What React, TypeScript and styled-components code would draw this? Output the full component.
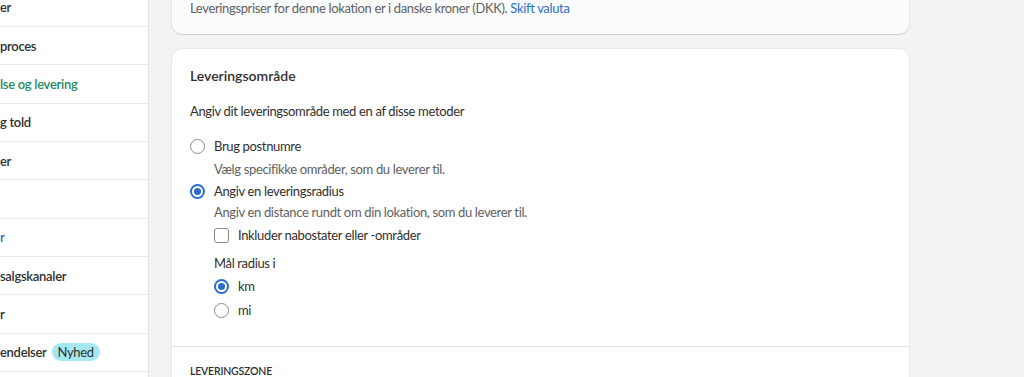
import styled, { createGlobalStyle } from "styled-components";

const GlobalStyle = createGlobalStyle`
	html, body {
		margin: 0;
		padding: 0;
		height: 100%;
		overflow: hidden;
		background: #f3f3f3;
	}
	body {
		font-family: Lato, "Noto Sans", sans-serif;
		font-size: 13px;
		letter-spacing: -0.35px;
		color: #303030;
	}
	#root {
		height: 100%;
	}
`

const Shell = styled.div`
	display: flex;
	align-items: flex-start;
	height: 100vh;
	overflow: hidden;
`

// Settings navigation (scrolled so the labels are cut on the left)
const Sidebar = styled.nav`
	flex: 0 0 148px;
	align-self: stretch;
	background: #ffffff;
	border-right: 1px solid #e3e3e3;
	overflow: hidden;
`

const NavList = styled.ul`
	margin: -11.33px 0 0;
	padding: 0;
	list-style: none;
`

type Tone = 'default' | 'active' | 'link';

const toneColor: Record<Tone, string> = {
	default: '#303030',
	active: '#1f8a65',
	link: '#2c6ecb',
}

const NavItem = styled.li<{ $tone: Tone }>`
	display: flex;
	align-items: center;
	gap: 5px;
	height: 38.33px;
	box-sizing: border-box;
	border-bottom: 1px solid #ebebeb;
	font-weight: 600;
	letter-spacing: -0.3px;
	line-height: 20px;
	white-space: nowrap;
	color: ${p => toneColor[p.$tone]};
`

const Badge = styled.span`
	display: inline-flex;
	align-items: center;
	height: 18px;
	padding: 0 6px;
	border-radius: 9px;
	background: #a4e8f2;
	color: #303030;
	font-weight: 400;
	letter-spacing: -0.35px;
`

const Main = styled.main`
	flex: 0 0 737px;
	margin: -18px 0 0 23px;
	display: flex;
	flex-direction: column;
	gap: 15px;
`

const Card = styled.section<{ $muted?: boolean }>`
	background: ${p => p.$muted ? '#fafbfb' : '#ffffff'};
	border-radius: 10px;
	box-shadow: 0 1px 1px rgba(0, 0, 0, 0.12), 0 0 0 1px rgba(0, 0, 0, 0.035);
	overflow: hidden;
`

const NoticeText = styled.p`
	margin: 0;
	padding: 16px 18px;
	line-height: 20px;
	color: #616161;
`

const Link = styled.a`
	color: #2c6ecb;
	text-decoration: none;
	cursor: pointer;
`

const Section = styled.div<{ $divided?: boolean }>`
	padding: ${p => p.$divided ? '16px 18px' : '17px 18px 24px'};
	border-top: ${p => p.$divided ? '1px solid #e3e3e3' : 'none'};
`

const Title = styled.h2`
	margin: 0;
	font-size: 14px;
	font-weight: 600;
	letter-spacing: 0;
	line-height: 20px;
`

const Text = styled.p`
	margin: 15px 0 0;
	line-height: 20px;
`

const Options = styled.div`
	margin-top: 14px;
	display: flex;
	flex-direction: column;
`

const Choice = styled.label<{ $tall?: boolean; $gap?: number }>`
	display: flex;
	align-items: center;
	gap: 9px;
	height: ${p => p.$tall ? 24 : 22}px;
	margin-top: ${p => p.$gap ?? 0}px;
	line-height: 20px;
	cursor: pointer;
`

const Radio = styled.span<{ $checked?: boolean }>`
	flex: 0 0 15px;
	width: 15px;
	height: 15px;
	box-sizing: border-box;
	border-radius: 50%;
	border: ${p => p.$checked ? '2px solid #2c6ecb' : '1.5px solid #8a8a8a'};
	display: grid;
	place-items: center;

	&::after {
		content: '';
		width: 7px;
		height: 7px;
		border-radius: 50%;
		background: ${p => p.$checked ? '#2c6ecb' : 'transparent'};
	}
`

const Checkbox = styled.span`
	flex: 0 0 15px;
	width: 15px;
	height: 15px;
	box-sizing: border-box;
	border-radius: 3px;
	border: 1.5px solid #8a8a8a;
`

const Helper = styled.div<{ $gap?: number }>`
	margin: ${p => p.$gap ?? 0}px 0 0 24px;
	line-height: 20px;
	color: #616161;
`

const Nested = styled.div`
	margin-left: 24px;
	display: flex;
	flex-direction: column;
`

const SubLabel = styled.div`
	margin-top: 6px;
	line-height: 20px;
`

const Caption = styled.h3`
	margin: 0;
	font-size: 10.5px;
	font-weight: 600;
	letter-spacing: -0.2px;
	line-height: 16px;
	text-transform: uppercase;
`

const navItems: { label: string; tone: Tone; badge?: string }[] = [
	{ label: 'er', tone: 'default' },
	{ label: 'proces', tone: 'default' },
	{ label: 'lse og levering', tone: 'active' },
	{ label: 'g told', tone: 'default' },
	{ label: 'er', tone: 'default' },
	{ label: '', tone: 'default' },
	{ label: 'r', tone: 'link' },
	{ label: 'salgskanaler', tone: 'default' },
	{ label: 'r', tone: 'default' },
	{ label: 'endelser', tone: 'default', badge: 'Nyhed' },
	{ label: '', tone: 'default' },
]

function App() {
	return (
		<>
			<GlobalStyle />
			<Shell>
				<Sidebar>
					<NavList>
						{navItems.map((item, index) => (
							<NavItem key={index} $tone={item.tone}>
								{item.label}
								{item.badge && <Badge>{item.badge}</Badge>}
							</NavItem>
						))}
					</NavList>
				</Sidebar>

				<Main>
					<Card $muted>
						<NoticeText>
							Leveringspriser for denne lokation er i danske kroner (DKK). <Link>Skift valuta</Link>
						</NoticeText>
					</Card>

					<Card>
						<Section>
							<Title>Leveringsområde</Title>
							<Text>Angiv dit leveringsområde med en af disse metoder</Text>
							<Options>
								<Choice>
									<Radio />
									Brug postnumre
								</Choice>
								<Helper $gap={2}>Vælg specifikke områder, som du leverer til.</Helper>
								<Choice $gap={1}>
									<Radio $checked />
									Angiv en leveringsradius
								</Choice>
								<Helper>Angiv en distance rundt om din lokation, som du leverer til.</Helper>
								<Nested>
									<Choice $tall $gap={1}>
										<Checkbox />
										Inkluder nabostater eller -områder
									</Choice>
									<SubLabel>Mål radius i</SubLabel>
									<Choice $tall $gap={1}>
										<Radio $checked />
										km
									</Choice>
									<Choice $tall>
										<Radio />
										mi
									</Choice>
								</Nested>
							</Options>
						</Section>
						<Section $divided>
							<Caption>Leveringszone</Caption>
						</Section>
					</Card>
				</Main>
			</Shell>
		</>
	)
}

export default App;
